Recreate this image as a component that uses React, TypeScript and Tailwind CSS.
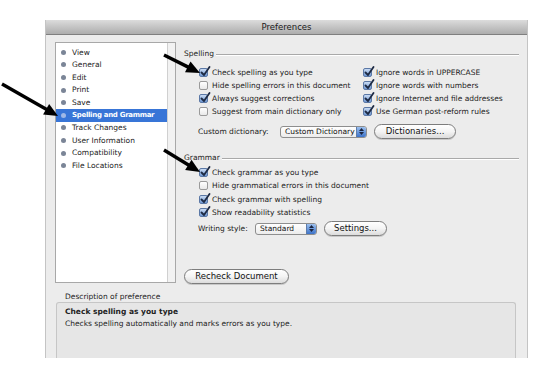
import React from 'react';

const font = { fontFamily: '"DejaVu Sans", "Liberation Sans", sans-serif' };

const navItems = [
  'View',
  'General',
  'Edit',
  'Print',
  'Save',
  'Spelling and Grammar',
  'Track Changes',
  'User Information',
  'Compatibility',
  'File Locations',
];

function Check({ on, label, h = 'h-[13px]' }: { on?: boolean; label: string; h?: string }) {
  return (
    <div className={'flex items-center gap-[4px] ' + h}>
      <div
        className={
          'relative w-[9px] h-[9px] rounded-[2px] border ' +
          (on
            ? 'border-[#5b78a6] bg-gradient-to-b from-[#c9dbf3] to-[#6f98d3]'
            : 'border-[#9a9a9a] bg-gradient-to-b from-white to-[#e9e9e9]')
        }
      >
        {on && (
          <svg className="absolute left-[0px] top-[-3px]" width="11" height="11" viewBox="0 0 11 11">
            <path d="M1.5 6.5 L4 9 L9.5 1" fill="none" stroke="#1d2a44" strokeWidth="1.8" strokeLinecap="round" strokeLinejoin="round" />
          </svg>
        )}
      </div>
      <span className="text-[7.5px] text-[#222] whitespace-nowrap">{label}</span>
    </div>
  );
}

function Popup({ label, w }: { label: string; w: string }) {
  return (
    <div className={'flex h-[12px] rounded-[3px] border border-[#8e8e8e] bg-gradient-to-b from-white to-[#ececec] overflow-hidden ' + w}>
      <div className="flex-1 flex items-center pl-[4px] text-[7.5px] text-[#111] whitespace-nowrap overflow-hidden">{label}</div>
      <div className="w-[10px] shrink-0 flex flex-col items-center justify-center gap-[1px] bg-gradient-to-b from-[#9cc0ef] to-[#3c72c8] border-l border-[#5c7cab]">
        <svg width="5" height="3" viewBox="0 0 5 3"><path d="M0 3 L2.5 0 L5 3Z" fill="#1b2540" /></svg>
        <svg width="5" height="3" viewBox="0 0 5 3"><path d="M0 0 L2.5 3 L5 0Z" fill="#1b2540" /></svg>
      </div>
    </div>
  );
}

function Pill({ label, w }: { label: string; w: string }) {
  return (
    <div className={'h-[15px] rounded-full border border-[#7d7d7d] bg-gradient-to-b from-white via-[#f4f4f4] to-[#dcdcdc] flex items-center justify-center text-[8.5px] text-[#111] shadow-[0_1px_0_rgba(0,0,0,0.15)] ' + w}>
      {label}
    </div>
  );
}

function Heading({ label }: { label: string }) {
  return (
    <div className="flex items-center h-[12px] gap-[2px] pr-[8px]">
      <span className="text-[7.5px] text-[#222]">{label}</span>
      <div className="flex-1 h-[2px] border-t border-[#a9a9a9] border-b border-b-white mt-[2px]" />
    </div>
  );
}

function Arrow({ x1, y1, x2, y2 }: { x1: number; y1: number; x2: number; y2: number }) {
  const a = Math.atan2(y2 - y1, x2 - x1);
  const len = 15;
  const spread = 0.42;
  const bx = x2 - Math.cos(a) * (len - 3);
  const by = y2 - Math.sin(a) * (len - 3);
  const p1 = [x2 - Math.cos(a - spread) * len, y2 - Math.sin(a - spread) * len];
  const p2 = [x2 - Math.cos(a + spread) * len, y2 - Math.sin(a + spread) * len];
  return (
    <g>
      <line x1={x1} y1={y1} x2={bx} y2={by} stroke="#000" strokeWidth="3.4" />
      <polygon points={`${x2},${y2} ${p1[0]},${p1[1]} ${p2[0]},${p2[1]}`} fill="#000" />
    </g>
  );
}

export default function App() {
  return (
    <div className="relative w-[540px] h-[369px] bg-white overflow-hidden" style={font}>
      <div className="pl-[45px] pt-[20px]">
        <div className="w-[483px] h-[338px] bg-[#ececec] border-x border-[#c4c4c4] flex flex-col">
          {/* title bar */}
          <div className="h-[15px] bg-gradient-to-b from-[#dcdcdc] to-[#adadad] border-b border-[#7f7f7f] flex items-center justify-center text-[8.5px] text-[#1a1a1a]">
            Preferences
          </div>

          <div className="flex pl-[9px] pt-[7px] h-[253px]">
            {/* sidebar list */}
            <div className="w-[121px] h-[241px] bg-white border border-[#a8a8a8] flex">
              <div className="flex-1 pt-[3px] border-r border-[#d0d0d0]">
                {navItems.map((item) => {
                  const sel = item === 'Spelling and Grammar';
                  return (
                    <div
                      key={item}
                      className={
                        'h-[12.6px] flex items-center gap-[6px] pl-[5px] whitespace-nowrap ' +
                        (sel ? 'bg-[#3875d7] text-white font-bold text-[7px] tracking-[-0.3px]' : 'text-[#222] text-[7.5px]')
                      }
                    >
                      <span className={'w-[5px] h-[5px] rounded-full shrink-0 ' + (sel ? 'bg-[#9fb8e6]' : 'bg-[#7b8597]')} />
                      {item}
                    </div>
                  );
                })}
              </div>
              <div className="w-[7px] bg-[#f2f2f2]" />
            </div>

            {/* right panel */}
            <div className="flex-1 pl-[8px] pt-[6px]">
              <Heading label="Spelling" />
              <div className="flex pl-[15px] pt-[6px]">
                <div className="w-[164px] flex flex-col">
                  <Check on label="Check spelling as you type" />
                  <Check label="Hide spelling errors in this document" />
                  <Check on label="Always suggest corrections" />
                  <Check label="Suggest from main dictionary only" />
                </div>
                <div className="flex flex-col">
                  <Check on label="Ignore words in UPPERCASE" />
                  <Check on label="Ignore words with numbers" />
                  <Check on label="Ignore Internet and file addresses" />
                  <Check on label="Use German post-reform rules" />
                </div>
              </div>
              <div className="flex items-center pl-[14px] mt-[6px] h-[15px]">
                <span className="text-[7.5px] text-[#222] w-[82px]">Custom dictionary:</span>
                <Popup label="Custom Dictionary" w="w-[87px]" />
                <div className="w-[7px]" />
                <Pill label="Dictionaries..." w="w-[82px]" />
              </div>

              <div className="mt-[13px]">
                <Heading label="Grammar" />
              </div>
              <div className="flex flex-col pl-[15px] pt-[2px]">
                <Check on h="h-[13.3px]" label="Check grammar as you type" />
                <Check h="h-[13.3px]" label="Hide grammatical errors in this document" />
                <Check on h="h-[13.3px]" label="Check grammar with spelling" />
                <Check on h="h-[13.3px]" label="Show readability statistics" />
              </div>
              <div className="flex items-center pl-[14px] mt-[2px] h-[15px]">
                <span className="text-[7.5px] text-[#222] w-[57px]">Writing style:</span>
                <Popup label="Standard" w="w-[62px]" />
                <div className="w-[7px]" />
                <Pill label="Settings..." w="w-[63px]" />
              </div>

              <div className="mt-[33px]">
                <Pill label="Recheck Document" w="w-[105px]" />
              </div>
            </div>
          </div>

          {/* description */}
          <div className="pl-[19px] pt-[3px] text-[7.5px] text-[#222] h-[14px]">Description of preference</div>
          <div className="ml-[10px] mr-[11px] flex-1 bg-[#e6e6e6] border border-[#c6c6c6] border-b-0 rounded-t-[3px] pl-[8px] pt-[3px]">
            <div className="text-[7.5px] font-bold text-[#222] leading-[12px]">Check spelling as you type</div>
            <div className="text-[7.5px] text-[#222] leading-[12px]">Checks spelling automatically and marks errors as you type.</div>
          </div>
        </div>
      </div>

      {/* annotation arrows */}
      <svg className="absolute left-0 top-0 pointer-events-none" width="540" height="369">
        <Arrow x1={2} y1={84} x2={58} y2={116} />
        <Arrow x1={164} y1={55} x2={200} y2={73} />
        <Arrow x1={164} y1={150} x2={200} y2={172} />
      </svg>
    </div>
  );
}
